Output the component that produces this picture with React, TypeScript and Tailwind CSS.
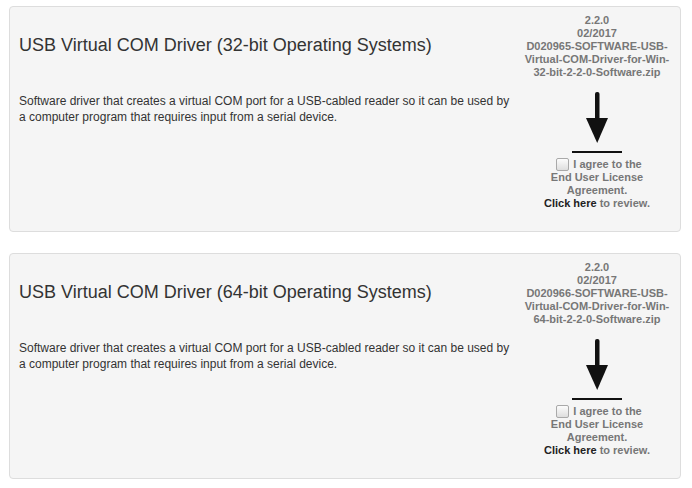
import React from "react";

type Driver = {
  bits: string;
  file: string[];
};

const drivers: Driver[] = [
  {
    bits: "32",
    file: ["D020965-SOFTWARE-USB-", "Virtual-COM-Driver-for-Win-", "32-bit-2-2-0-Software.zip"],
  },
  {
    bits: "64",
    file: ["D020966-SOFTWARE-USB-", "Virtual-COM-Driver-for-Win-", "64-bit-2-2-0-Software.zip"],
  },
];

function DownArrow() {
  return (
    <svg width="24" height="52" viewBox="0 0 24 52" className="block">
      <rect x="10" y="0" width="4.5" height="28" rx="2" fill="#111" />
      <polygon points="1,26 23,26 12.2,51" fill="#111" />
    </svg>
  );
}

function DriverPanel({ driver }: { driver: Driver }) {
  return (
    <div className="ml-[9px] w-[672px] h-[226px] bg-[#f5f5f5] border border-[#dddddd] rounded-[4px] flex pr-[3px]">
      {/* 왼쪽: 제목 + 설명 */}
      <div className="flex-1 pl-[9px]">
        <h3 className="mt-[28px] text-[18px] leading-[20px] text-[#333333] whitespace-nowrap">
          USB Virtual COM Driver ({driver.bits}-bit Operating Systems)
        </h3>
        <p className="mt-[38px] text-[12px] leading-[16px] text-[#333333] whitespace-nowrap">
          Software driver that creates a virtual COM port for a USB-cabled reader so it can be used by
          <br />
          a computer program that requires input from a serial device.
        </p>
      </div>

      {/* 오른쪽: 파일 + 다운로드 */}
      <div className="w-[160px] flex flex-col items-center pt-[6.5px] text-[11px] leading-[13px] font-bold text-[#777777] text-center whitespace-nowrap">
        <div>2.2.0</div>
        <div>02/2017</div>
        {driver.file.map((line) => (
          <div key={line}>{line}</div>
        ))}
        <div className="mt-[13.5px]">
          <DownArrow />
        </div>
        <div className="mt-[7px] w-[50px] h-[2px] bg-[#111111]" />
        <div className="mt-[5px] flex items-center pl-[4px]">
          <span className="w-[13px] h-[13px] rounded-[2px] border border-[#a9a9a9] bg-gradient-to-b from-[#fcfcfc] to-[#dedede] mr-[4px]" />
          <span>I agree to the</span>
        </div>
        <div>End User License</div>
        <div>Agreement.</div>
        <div>
          <span className="text-[#222222]">Click here</span> to review.
        </div>
      </div>
    </div>
  );
}

export default function App() {
  return (
    <div className="w-[692px] h-[488px] bg-white pt-[6px] flex flex-col gap-[21px] font-['Liberation_Sans',Arial,sans-serif]">
      {drivers.map((d) => (
        <DriverPanel key={d.bits} driver={d} />
      ))}
    </div>
  );
}
